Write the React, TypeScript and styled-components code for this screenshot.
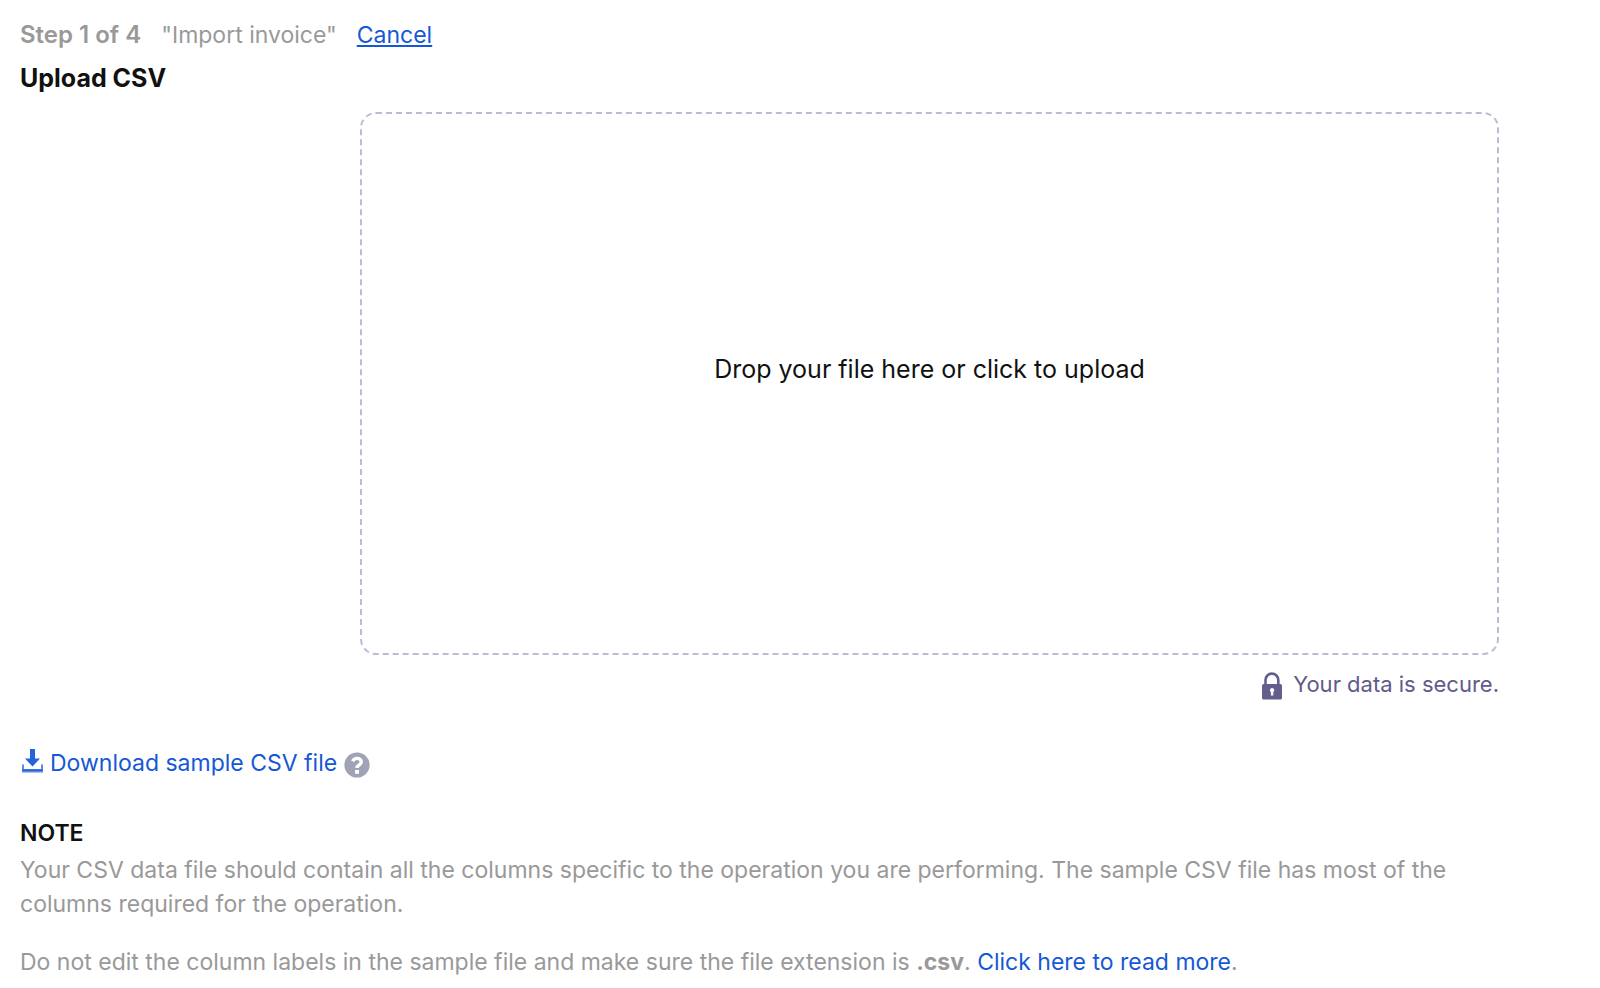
import React from "react";
import styled, { createGlobalStyle } from "styled-components";

const GlobalStyle = createGlobalStyle`
  * { box-sizing: border-box; }
  body { margin: 0; background: #fff; font-family: Inter, "Liberation Sans", sans-serif; color: #111; }
`;

const Page = styled.main`
  padding: 18px 20px 0;
  font-size: 23px;
  line-height: 34px;
`;
const StepBar = styled.header`
  display: flex;
  gap: 20px;
  color: #999;
`;
const StepCount = styled.strong`
  font-size: 24px;
  font-weight: 600;
`;
const Link = styled.a<{ $underlined?: boolean }>`
  color: #1558d6;
  text-decoration: ${(p) => (p.$underlined ? "underline" : "none")};
  text-decoration-thickness: 2px;
  text-underline-offset: 2px;
`;
const Title = styled.h1`
  margin: 8px 0 0;
  font-size: 25px;
  line-height: 36px;
  font-weight: 700;
`;
const UploadArea = styled.section`
  margin: 16px 81px 0 340px;
`;
const DropZone = styled.label`
  display: flex;
  align-items: center;
  justify-content: center;
  height: 543px;
  padding-bottom: 30px;
  border: 2px dashed #bdbad6;
  border-radius: 16px;
  font-size: 25px;
  cursor: pointer;
`;
const FileInput = styled.input`
  position: absolute;
  width: 1px;
  height: 1px;
  opacity: 0;
`;
const Secure = styled.p`
  display: flex;
  justify-content: flex-end;
  align-items: center;
  gap: 10px;
  margin: 12px 0 0;
  font-size: 22px;
  color: #5f5b8a;

  svg { margin-top: 4px; }
`;
const Download = styled.div`
  display: flex;
  align-items: center;
  gap: 7px;
  margin-top: 45px;
`;
const DownloadLink = styled(Link)`
  display: flex;
  align-items: center;
  gap: 6px;

  svg { margin-bottom: 4px; }
`;
const Help = styled.button`
  display: flex;
  margin-top: 4px;
  padding: 0;
  border: 0;
  background: none;
`;
const Note = styled.section`
  margin: 36px 81px 0 0;
  color: #999;
`;
const NoteTitle = styled.h2`
  margin: 0 0 3px;
  font-size: 23px;
  line-height: 34px;
  font-weight: 600;
  color: #111;
`;
const Text = styled.p`
  margin: 0 0 24px;
`;

export default function App() {
  return (
    <>
      <GlobalStyle />
      <Page>
        <StepBar>
          <StepCount>Step 1 of 4</StepCount>
          <span>"Import invoice"</span>
          <Link href="#cancel" $underlined>Cancel</Link>
        </StepBar>
        <Title>Upload CSV</Title>
        <UploadArea>
          <DropZone>
            Drop your file here or click to upload
            <FileInput type="file" accept=".csv" />
          </DropZone>
          <Secure>
            <svg width="22" height="28" viewBox="0 0 22 28" aria-hidden="true">
              <path d="M4.5 13V8a6.2 6.2 0 0 1 12.8 0v5" fill="none" stroke="#625f8c" strokeWidth="2.6" />
              <rect x="1" y="12" width="20" height="15.5" rx="1.6" fill="#625f8c" />
              <path d="M11 16a2.2 2.2 0 0 1 1.3 4v3.6H9.9V20A2.2 2.2 0 0 1 11 16z" fill="#fff" />
            </svg>
            Your data is secure.
          </Secure>
        </UploadArea>
        <Download>
          <DownloadLink href="#sample">
            <svg width="24" height="24" viewBox="0 0 24 24" aria-hidden="true">
              <path d="M10 0h5v9.5h5l-7.5 8-7.5-8h5z" fill="#2563d9" />
              <path d="M2 15.5h2V20h17v-4.500h2V23.500H2z" fill="#5d8ae6" />
              <path d="M2 20.500h21v1.500H2z" fill="#2563d9" />
            </svg>
            Download sample CSV file
          </DownloadLink>
          <Help type="button" aria-label="Help">
            <svg width="26" height="26" viewBox="0 0 26 26" aria-hidden="true">
              <circle cx="13" cy="13" r="12.600" fill="#9fa3b5" />
              <path d="M8.600 9.300C9.500 7.300 11 6.400 13 6.400c2.400 0 4.300 1.400 4.300 3.500 0 3.300-4.300 2.800-4.300 6" fill="none" stroke="#fff" strokeWidth="3.400" />
              <rect x="11" y="18" width="4" height="3.800" fill="#fff" />
            </svg>
          </Help>
        </Download>
        <Note>
          <NoteTitle>NOTE</NoteTitle>
          <Text>Your CSV data file should contain all the columns specific to the operation you are performing. The sample CSV file has most of the columns required for the operation.</Text>
          <Text>Do not edit the column labels in the sample file and make sure the file extension is <strong>.csv</strong>. <Link href="#more">Click here to read more</Link>.</Text>
        </Note>
      </Page>
    </>
  );
}
